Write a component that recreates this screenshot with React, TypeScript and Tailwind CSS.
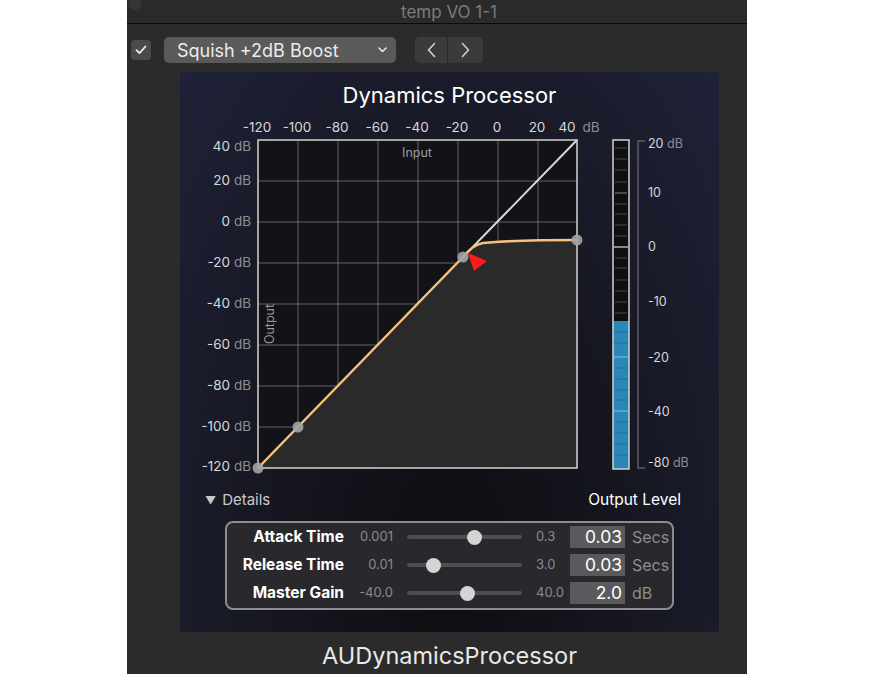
import React from "react";

const GRID_X = [298, 338, 378, 418, 458, 498, 538];
const GRID_Y = [181, 222, 263, 304, 345, 386, 427];

const TOP_LABELS: [string, number][] = [
  ["-120", 257],
  ["-100", 297],
  ["-80", 337],
  ["-60", 377],
  ["-40", 417],
  ["-20", 457],
  ["0", 497],
  ["20", 537],
  ["40", 567],
];

const LEFT_LABELS: [string, number][] = [
  ["40", 151],
  ["20", 185],
  ["0", 226],
  ["-20", 267],
  ["-40", 308],
  ["-60", 349],
  ["-80", 390],
  ["-100", 431],
  ["-120", 471],
];

const METER_LABELS: [string, number, boolean][] = [
  ["20", 148, true],
  ["10", 197, false],
  ["0", 251, false],
  ["-10", 306, false],
  ["-20", 362, false],
  ["-40", 416, false],
  ["-80", 467, true],
];

interface SliderRow {
  label: string;
  min: string;
  max: string;
  knob: number;
  value: string;
  unit: string;
}

const ROWS: SliderRow[] = [
  { label: "Attack Time", min: "0.001", max: "0.3", knob: 59.5, value: "0.03", unit: "Secs" },
  { label: "Release Time", min: "0.01", max: "3.0", knob: 18.5, value: "0.03", unit: "Secs" },
  { label: "Master Gain", min: "-40.0", max: "40.0", knob: 52.5, value: "2.0", unit: "dB" },
];

const CURVE =
  "M258,468 L463,257 C469,251 473,245 483,243 C505,241 540,240 577,240";

function CurveGraph() {
  return (
    <svg width={406} height={362} viewBox="200 114 406 362" className="shrink-0">
      {TOP_LABELS.map(([t, x]) => (
        <text key={t} x={x} y={132} fontSize={13.5} textAnchor="middle" fill="#d8d8d8">
          {t}
        </text>
      ))}
      <text x={591} y={132} fontSize={13.5} textAnchor="middle" fill="#8d8d92">
        dB
      </text>

      {LEFT_LABELS.map(([t, y]) => (
        <text key={t} x={251} y={y} fontSize={13.5} textAnchor="end" fill="#d8d8d8">
          {t}
          <tspan fill="#8d8d92"> dB</tspan>
        </text>
      ))}

      <rect x={258} y={140} width={319} height={328} fill="#121217" />

      {GRID_X.map((x) => (
        <line key={x} x1={x} y1={140} x2={x} y2={468} stroke="#8a8a90" strokeOpacity={0.45} strokeWidth={1.5} />
      ))}
      {GRID_Y.map((y) => (
        <line key={y} x1={258} y1={y} x2={577} y2={y} stroke="#8a8a90" strokeOpacity={0.45} strokeWidth={1.5} />
      ))}

      <path d={`${CURVE} L577,468 Z`} fill="#2a2a2a" />

      <rect x={258} y={140} width={319} height={328} fill="none" stroke="#d4d4d4" strokeWidth={1.5} />

      <text x={417} y={157} fontSize={12.5} textAnchor="middle" fill="#9a9aa0">
        Input
      </text>
      <text x={274} y={324} fontSize={12.5} textAnchor="middle" fill="#9a9aa0" transform="rotate(-90 274 324)">
        Output
      </text>

      <line x1={463} y1={257} x2={577} y2={140} stroke="#d8d8d8" strokeWidth={2} />
      <path d={CURVE} fill="none" stroke="#f6c27c" strokeWidth={2.5} />

      {[
        [463, 257],
        [577, 240],
        [298, 427],
        [258, 468],
      ].map(([x, y]) => (
        <circle key={x} cx={x} cy={y} r={5.5} fill="#a4a4a6" fillOpacity={0.9} />
      ))}

      <polygon points="468,253 487,261 474,271" fill="#ff1a1a" />
    </svg>
  );
}

function OutputMeter() {
  const darkTicks = [148, 159, 170, 182, 204, 214, 225, 236, 258, 268, 280, 291, 302, 313];
  const blueTicks = [332, 343, 368, 379, 390, 400, 422, 433, 444, 455];
  return (
    <svg width={100} height={362} viewBox="606 114 100 362" className="shrink-0">
      <rect x={613} y={140} width={16} height={329} fill="#0f0f13" />
      {darkTicks.map((y) => (
        <line key={y} x1={615} y1={y} x2={627} y2={y} stroke="#34343a" strokeWidth={1.5} />
      ))}
      <line x1={615} y1={193} x2={627} y2={193} stroke="#5c5c62" strokeWidth={1.5} />
      <line x1={614} y1={247} x2={628} y2={247} stroke="#b4b4b8" strokeWidth={1.5} />
      <rect x={613} y={321} width={16} height={148} fill="#2b88b6" />
      {blueTicks.map((y) => (
        <line key={y} x1={614} y1={y} x2={628} y2={y} stroke="#2479a4" strokeWidth={1.5} />
      ))}
      <line x1={614} y1={357} x2={628} y2={357} stroke="#5eb3da" strokeWidth={1.5} />
      <line x1={614} y1={411} x2={628} y2={411} stroke="#5eb3da" strokeWidth={1.5} />
      <rect x={613} y={140} width={16} height={329} fill="none" stroke="#d4d4d4" strokeWidth={1.5} />

      <path d="M645,141 L638,141 L638,468 L645,468" fill="none" stroke="#5c5c64" strokeWidth={1.5} />

      {METER_LABELS.map(([t, y, unit]) => (
        <text key={t} x={648} y={y} fontSize={12.5} fill="#d8d8d8">
          {t}
          {unit && <tspan fill="#8d8d92"> dB</tspan>}
        </text>
      ))}
    </svg>
  );
}

function ParamRow({ row }: { row: SliderRow }) {
  return (
    <div className="flex h-[28px] items-center">
      <div className="w-[117px] text-right text-[15.5px] font-bold text-white">{row.label}</div>
      <div className="w-[49px] text-right text-[13px] text-[#8a8a8e]">{row.min}</div>
      <div className="relative ml-[14px] flex h-[15px] w-[115px] items-center">
        <div className="h-[4px] w-full rounded-full bg-[#4d4d52]" />
        <div
          className="absolute top-0 h-[15px] w-[15px] rounded-full bg-[#d4d4d4]"
          style={{ left: row.knob }}
        />
      </div>
      <div className="ml-[14px] w-[34px] text-[13px] text-[#8a8a8e]">{row.max}</div>
      <div className="h-[22px] w-[55px] bg-[#5a5a5c] pr-[3px] text-right text-[17.5px] leading-[22px] text-white">
        {row.value}
      </div>
      <div className="ml-[7px] text-[16px] text-[#8d8d92]">{row.unit}</div>
    </div>
  );
}

export default function App() {
  return (
    <div className="relative h-[674px] w-[873px] overflow-hidden bg-white font-['Inter',sans-serif]">
      <div className="ml-[127px] flex h-full w-[620px] flex-col bg-[#2b2b2b]">
        {/* title bar */}
        <div className="relative flex h-[24px] shrink-0 items-center justify-center border-b border-[#0b0b0b] bg-[#2a2a2a] pl-[24px]">
          <div className="absolute left-[1px] top-[-4px] h-[14px] w-[14px] rounded-full bg-[#353535]" />
          <span className="text-[17px] leading-[20px] text-[#7b7b7b]">temp VO 1-1</span>
        </div>

        {/* toolbar */}
        <div className="flex h-[48px] shrink-0 items-center pl-[4px] pt-[4px]">
          <div className="flex h-[20px] w-[20px] items-center justify-center rounded-[4px] bg-[#4a4a4a]">
            <svg width="12" height="10" viewBox="0 0 12 10">
              <path d="M1.5,5.2 L4.5,8.2 L10.5,1.5" fill="none" stroke="#eeeeee" strokeWidth={1.8} strokeLinecap="round" strokeLinejoin="round" />
            </svg>
          </div>
          <div className="ml-[13px] flex h-[26px] w-[232px] items-center justify-between rounded-[5px] bg-[#5a5a5a] pl-[13px] pr-[9px]">
            <span className="text-[18px] text-[#ececec]">Squish +2dB Boost</span>
            <svg width="9" height="6" viewBox="0 0 9 6">
              <path d="M1,1 L4.5,4.5 L8,1" fill="none" stroke="#e4e4e4" strokeWidth={1.6} strokeLinecap="round" strokeLinejoin="round" />
            </svg>
          </div>
          <div className="ml-[19px] flex h-[26px] w-[68px] overflow-hidden rounded-[5px] bg-[#3b3b3b]">
            <div className="flex w-[33px] items-center justify-center border-r border-[#2b2b2b]">
              <svg width="9" height="16" viewBox="0 0 9 16">
                <path d="M7.5,1.5 L1.5,8 L7.5,14.5" fill="none" stroke="#cfcfcf" strokeWidth={1.6} strokeLinecap="round" strokeLinejoin="round" />
              </svg>
            </div>
            <div className="flex flex-1 items-center justify-center">
              <svg width="9" height="16" viewBox="0 0 9 16">
                <path d="M1.5,1.5 L7.5,8 L1.5,14.5" fill="none" stroke="#cfcfcf" strokeWidth={1.6} strokeLinecap="round" strokeLinejoin="round" />
              </svg>
            </div>
          </div>
        </div>

        {/* plugin panel */}
        <div className="ml-[53px] flex h-[560px] w-[539px] shrink-0 flex-col bg-[radial-gradient(ellipse_at_50%_88%,#0d0d11_0%,#15161f_45%,#1f2238_100%)] pt-[9px]">
          <div className="text-center text-[22px] leading-[28px] text-white">Dynamics Processor</div>

          <div className="mt-[5px] flex pl-[20px]">
            <CurveGraph />
            <OutputMeter />
          </div>

          <div className="mt-[15px] flex h-[18px] items-center justify-between pl-[25px] pr-[38px]">
            <div className="flex items-center gap-[6px] text-[15px] text-[#c9c9cc]">
              <span className="text-[11px]">▼</span>
              Details
            </div>
            <div className="text-[15.5px] text-white">Output Level</div>
          </div>

          <div className="ml-[45px] mt-[12px] h-[89px] w-[449px] rounded-[8px] border-2 border-[#8d8d90] bg-[#28282d]">
            {ROWS.map((r) => (
              <ParamRow key={r.label} row={r} />
            ))}
          </div>
        </div>

        {/* plugin name */}
        <div className="ml-[53px] w-[539px] pt-[10px] text-center text-[23.5px] leading-[28px] text-[#e8e8e8]">
          AUDynamicsProcessor
        </div>
      </div>
    </div>
  );
}
